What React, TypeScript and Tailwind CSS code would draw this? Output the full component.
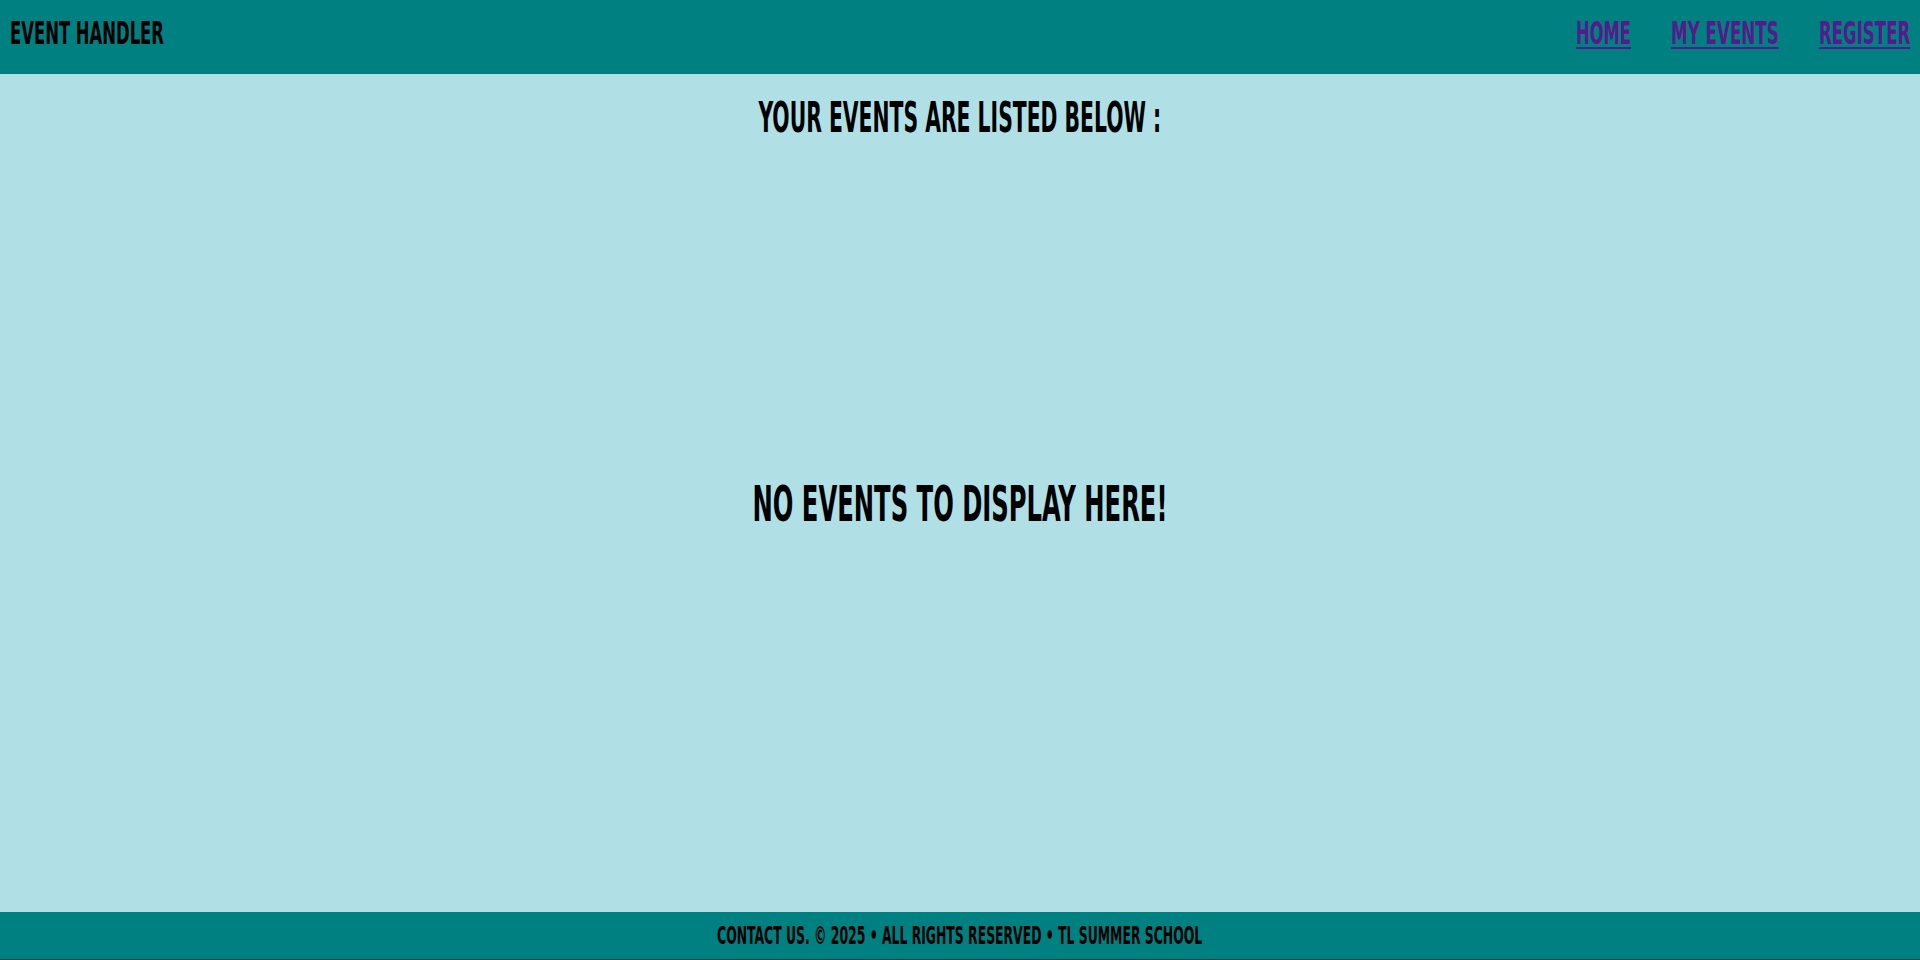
import { useLayoutEffect, useRef, useState } from "react";

const FONT =
  "font-['Liberation_Sans_Narrow','DejaVu_Sans_Condensed','Liberation_Sans',Arial,sans-serif] font-bold uppercase";

function Fit({
  text,
  target,
  className = "",
  origin = "left",
}: {
  text: string;
  target: number;
  className?: string;
  origin?: "left" | "center";
}) {
  const ref = useRef<HTMLSpanElement>(null);
  const [s, setS] = useState(1);
  useLayoutEffect(() => {
    const measure = () => {
      const el = ref.current;
      if (!el) return;
      const w = el.offsetWidth;
      if (w > 0) setS(target / w);
    };
    measure();
    if (document.fonts && document.fonts.ready) {
      document.fonts.ready.then(measure);
    }
  }, [target, text]);
  return (
    <span
      ref={ref}
      className={`inline-block whitespace-nowrap ${
        origin === "left" ? "origin-left" : "origin-center"
      } ${className}`}
      style={{ transform: `scaleX(${s})` }}
    >
      {text}
    </span>
  );
}

const LINK =
  "text-[#551a8b] underline decoration-[2px] underline-offset-[3px]";

export default function App() {
  return (
    <div className={`flex min-h-screen flex-col bg-[#b0e0e6] text-black ${FONT}`}>
      <header className="flex h-[74px] items-start justify-between bg-[#008080] px-[10px] pt-[17px]">
        <div className="w-[154px] text-[32px] leading-none">
          <Fit text="Event Handler" target={154} />
        </div>
        <nav className="flex gap-[40px] text-[32px] leading-none">
          <a href="#" className="block w-[55px] text-[#551a8b]">
            <Fit text="Home" target={55} className={LINK} />
          </a>
          <a href="#" className="block w-[108px] text-[#551a8b]">
            <Fit text="My Events" target={108} className={LINK} />
          </a>
          <a href="#" className="block w-[91px] text-[#551a8b]">
            <Fit text="Register" target={91} className={LINK} />
          </a>
        </nav>
      </header>

      <main className="flex flex-1 flex-col items-center pt-[23px]">
        <h2 className="flex h-[42px] w-full justify-center text-[42px] leading-none">
          <Fit text="Your events are listed below :" target={403} origin="center" />
        </h2>
        <p className="mt-[341px] flex w-full justify-center text-[49px] leading-none">
          <Fit text="No events to display here!" target={415} origin="center" />
        </p>
      </main>

      <footer className="flex h-[48px] justify-center border-b border-[#0b3b3b] bg-[#008080] pt-[11px] text-[25px] leading-none">
        <Fit text="Contact us. © 2025 • All rights reserved • TL Summer School" target={485} origin="center" />
      </footer>
    </div>
  );
}
